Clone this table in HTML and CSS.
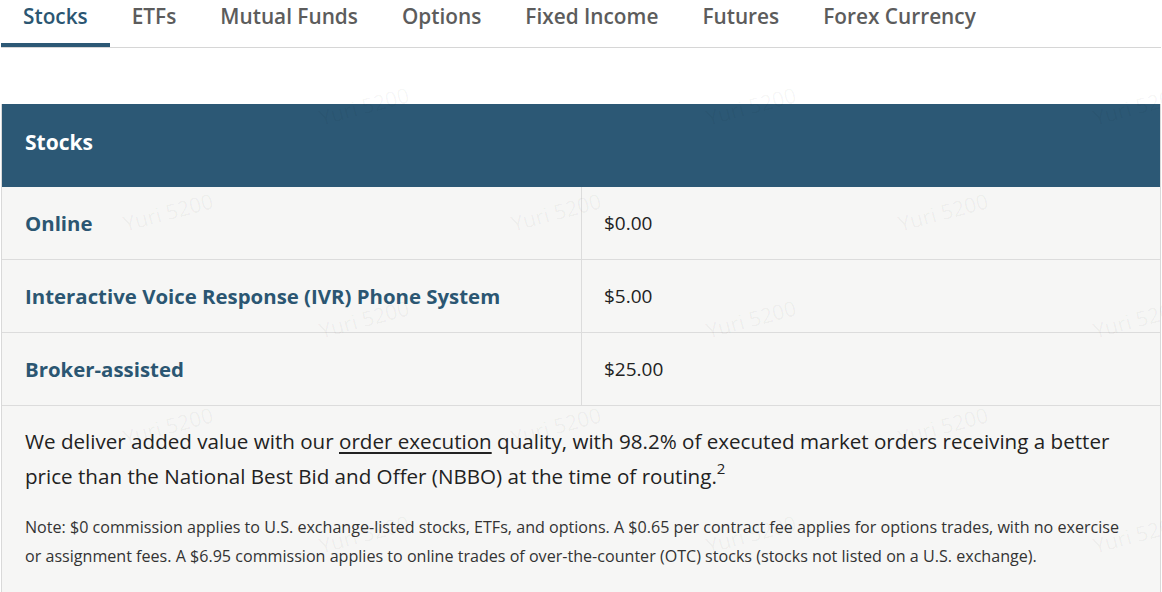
FILE: index.html
```html
<!DOCTYPE html>
<html lang="en">
<head>
<meta charset="utf-8">
<title>Pricing</title>
<link rel="stylesheet" href="styles.css">
</head>
<body>
<div class="page">
  <nav class="tabs">
    <a class="tab active">Stocks</a>
    <a class="tab">ETFs</a>
    <a class="tab">Mutual Funds</a>
    <a class="tab">Options</a>
    <a class="tab">Fixed Income</a>
    <a class="tab">Futures</a>
    <a class="tab">Forex Currency</a>
  </nav>
  <section class="pricing">
    <div class="head">Stocks</div>
    <div class="row">
      <div class="label">Online</div>
      <div class="value">$0.00</div>
    </div>
    <div class="row">
      <div class="label">Interactive Voice Response (IVR) Phone System</div>
      <div class="value">$5.00</div>
    </div>
    <div class="row">
      <div class="label">Broker-assisted</div>
      <div class="value">$25.00</div>
    </div>
    <div class="foot">
      <p class="lead">We deliver added value with our <a class="link">order execution</a> quality, with 98.2% of executed market orders receiving a better price than the National Best Bid and Offer (NBBO) at the time of routing.<sup>2</sup></p>
      <p class="note">Note: $0 commission applies to U.S. exchange-listed stocks, ETFs, and options. A $0.65 per contract fee applies for options trades, with no exercise or assignment fees. A $6.95 commission applies to online trades of over-the-counter (OTC) stocks (stocks not listed on a U.S. exchange).</p>
    </div>
  </section>
  <div class="marks" aria-hidden="true">
    <span class="wm w1">Yuri 5200</span>
    <span class="wm w2">Yuri 5200</span>
    <span class="wm w3">Yuri 5200</span>
    <span class="wm w4">Yuri 5200</span>
    <span class="wm w5">Yuri 5200</span>
    <span class="wm w6">Yuri 5200</span>
    <span class="wm w7">Yuri 5200</span>
    <span class="wm w8">Yuri 5200</span>
    <span class="wm w9">Yuri 5200</span>
    <span class="wm w10">Yuri 5200</span>
    <span class="wm w11">Yuri 5200</span>
    <span class="wm w12">Yuri 5200</span>
    <span class="wm w13">Yuri 5200</span>
    <span class="wm w14">Yuri 5200</span>
    <span class="wm w15">Yuri 5200</span>
  </div>
</div>
</body>
</html>
```

FILE: styles.css
```css
* { box-sizing: border-box; }
html, body { margin: 0; padding: 0; background: #fff; }
body { font-family: "Open Sans", "Noto Sans", sans-serif; color: #222; overflow: hidden; }
.page { position: relative; padding: 0 1px; }

.tabs {
  display: flex;
  height: 48px;
  border-bottom: 1px solid #d6d6d6;
}
.tab {
  padding: 0 22px;
  font-size: 20.8px;
  font-weight: 600;
  color: #5c5c5c;
  line-height: 33px;
  height: 47px;
  border-bottom: 4px solid transparent;
  white-space: nowrap;
}
.tab.active {
  color: #2b5672;
  border-bottom-color: #2c5875;
}

.pricing {
  margin-top: 56px;
  border: 1px solid #d9d9d9;
  border-top: 0;
  background: #f6f6f5;
}
.head {
  height: 83px;
  background: #2c5875;
  color: #fff;
  font-weight: 700;
  font-size: 21px;
  padding: 0 23px 8px;
  display: flex;
  align-items: center;
}
.row {
  display: grid;
  grid-template-columns: 580px 1fr;
  height: 73px;
  border-bottom: 1px solid #dcdcdc;
}
.label, .value {
  display: flex;
  align-items: center;
  padding: 0 23px;
  font-size: 19px;
}
.label {
  font-size: 20.4px;
  font-weight: 700;
  color: #2b5672;
  border-right: 1px solid #dcdcdc;
}
.value { color: #222; padding-left: 22px; }

.foot { padding: 18px 23px 40px; }
.lead {
  margin: 0;
  font-size: 20.6px;
  line-height: 35px;
  color: #222;
}
.lead sup { font-size: 15px; line-height: 0; vertical-align: 10px; }
.link { color: #222; text-decoration: underline; text-underline-offset: 3px; }
.note {
  margin: 19px 0 0;
  font-size: 16.1px;
  line-height: 29px;
  color: #333;
}

.marks { position: absolute; inset: 0; pointer-events: none; }
.wm {
  position: absolute;
  font-size: 21px;
  color: rgba(0,0,0,0.045);
  transform: rotate(-15deg);
  white-space: nowrap;
}
.w1 { left: 318px; top: 92px; }
.w2 { left: 705px; top: 92px; }
.w3 { left: 1092px; top: 92px; }
.w4 { left: 122px; top: 198px; }
.w5 { left: 510px; top: 198px; }
.w6 { left: 897px; top: 198px; }
.w7 { left: 318px; top: 305px; }
.w8 { left: 705px; top: 305px; }
.w9 { left: 1092px; top: 305px; }
.w10 { left: 122px; top: 412px; }
.w11 { left: 510px; top: 412px; }
.w12 { left: 897px; top: 412px; }
.w13 { left: 318px; top: 520px; }
.w14 { left: 705px; top: 520px; }
.w15 { left: 1092px; top: 520px; }
```
